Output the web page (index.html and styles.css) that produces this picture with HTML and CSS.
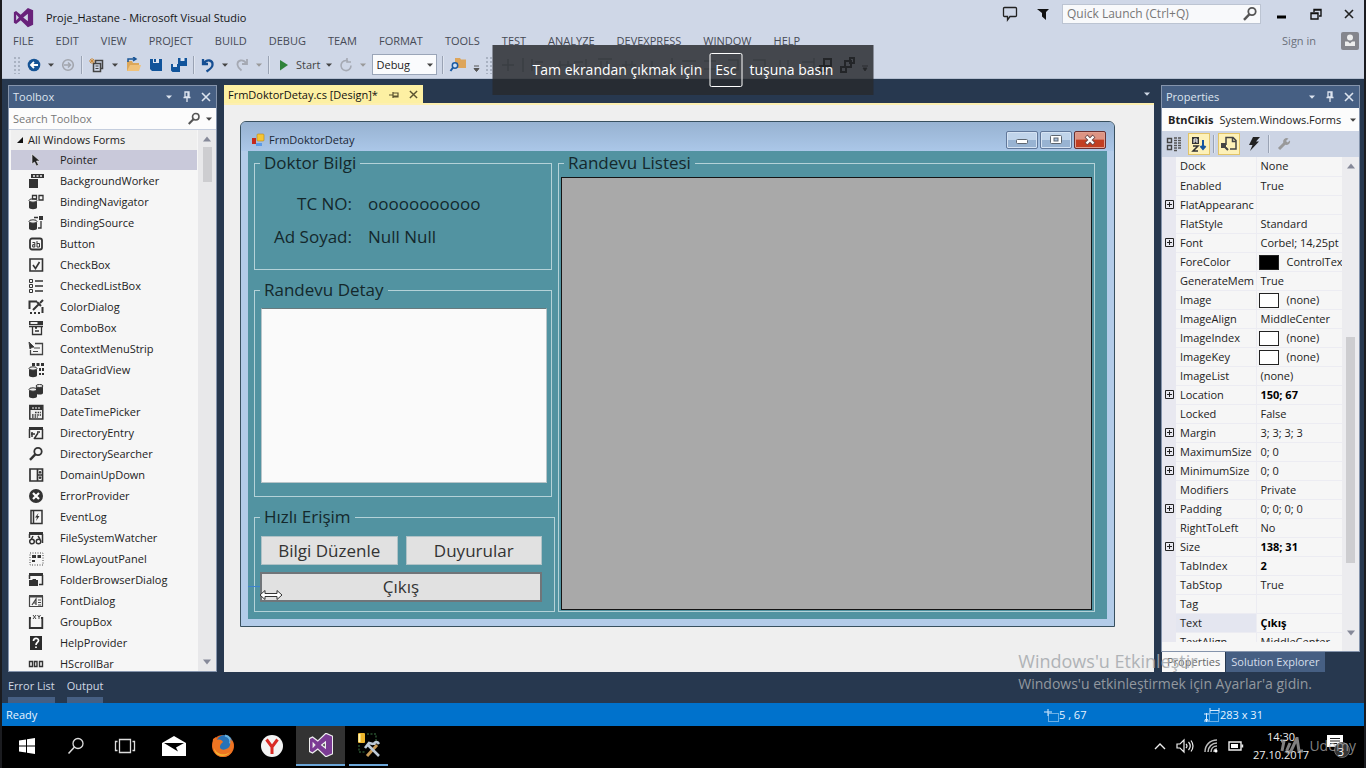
FILE: index.html
```html
<!DOCTYPE html>
<html lang="tr">
<head>
<meta charset="utf-8">
<title>Proje_Hastane - Microsoft Visual Studio</title>
<link rel="stylesheet" href="styles.css">
</head>
<body>
<svg class="defs" aria-hidden="true">
  <symbol id="caret" viewBox="0 0 8 8"><path d="M1 2.5h6L4 5.8z" fill="currentColor"/></symbol>
  <symbol id="pin" viewBox="0 0 10 12"><path d="M3 1h4v5H3zM6 1v5M1.5 6.5h7M5 7v4" fill="none" stroke="currentColor" stroke-width="1.3"/></symbol>
  <symbol id="close" viewBox="0 0 10 10"><path d="M1 1l8 8M9 1L1 9" stroke="currentColor" stroke-width="1.6"/></symbol>
  <symbol id="lens" viewBox="0 0 16 16"><circle cx="10" cy="5.5" r="3.7" fill="none" stroke="currentColor" stroke-width="1.8"/><path d="M7.3 8.4L2 13.8" stroke="currentColor" stroke-width="2.4"/></symbol>
  <symbol id="vs" viewBox="0 0 24 24"><path fill-rule="evenodd" fill="currentColor" d="M17 1l6 2.6v16.8L17 23l-8.2-7.800L3.500 19.300 1 18V6l2.500-1.300L8.800 8.800zM17 7.800L11.700 12 17 16.200zM3.600 8.700v6.600L6.700 12z"/></symbol>
  <symbol id="plus" viewBox="0 0 9 9"><path d="M.5.5h8v8h-8zM2 4.500h5M4.500 2v5" fill="none" stroke="#222"/></symbol>
  <symbol id="up" viewBox="0 0 8 8"><path d="M0 6.500L4 1.500l4 5z" fill="currentColor"/></symbol>
  <symbol id="down" viewBox="0 0 8 8"><path d="M0 1.500L4 6.500l4-5z" fill="currentColor"/></symbol>
  <symbol id="drum" viewBox="0 0 16 16"><path d="M1 6.500v7c0 2.300 8 2.300 8 0v-7z" fill="#333"/><ellipse cx="5" cy="6.500" rx="4" ry="1.700" fill="#eee" stroke="#333"/></symbol>
</svg>

<header class="top">
  <div class="titlebar">
    <svg class="logo" viewBox="0 0 24 24"><use href="#vs"/></svg>
    <h1>Proje_Hastane - Microsoft Visual Studio</h1>
    <button class="plain" aria-label="Feedback"><svg width="16" height="16" viewBox="0 0 16 16"><path d="M2.500 1.500h11a1 1 0 0 1 1 1v7a1 1 0 0 1-1 1H8L5.500 14v-3.500h-3a1 1 0 0 1-1-1v-7a1 1 0 0 1 1-1z" fill="none" stroke="#222" stroke-width="1.300"/></svg></button>
    <button class="plain flag" aria-label="Notifications"><svg width="14" height="14" viewBox="0 0 14 14"><path d="M1 2h12l-3 3v8L6 9.500V6z" fill="#111"/></svg></button>
    <label class="quick"><input type="text" placeholder="Quick Launch (Ctrl+Q)" aria-label="Quick Launch"><svg width="16" height="16"><use href="#lens"/></svg></label>
    <div class="winctl">
      <button class="plain" aria-label="Minimize"><svg width="12" height="12"><path d="M1 9h9" stroke="#000" stroke-width="3"/></svg></button>
      <button class="plain" aria-label="Restore"><svg width="12" height="12"><path d="M1 5h7v6H1zM4 4V1.500h7V8H9M1 5.500h7M4 2h7" fill="none" stroke="#111" stroke-width="1.400"/></svg></button>
      <button class="plain" aria-label="Close"><svg width="10" height="10"><use href="#close"/></svg></button>
    </div>
  </div>
  <div class="menurow">
    <nav class="menu">
      <button>FILE</button><button>EDIT</button><button>VIEW</button><button>PROJECT</button><button>BUILD</button><button>DEBUG</button><button>TEAM</button><button>FORMAT</button><button>TOOLS</button><button>TEST</button><button>ANALYZE</button><button>DEVEXPRESS</button><button>WINDOW</button><button>HELP</button>
    </nav>
    <a class="signin" href="#">Sign in</a>
    <svg width="18" height="18" viewBox="0 0 18 18"><rect width="18" height="18" rx="2" fill="#85868d"/><circle cx="9" cy="5.500" r="3" fill="#eee"/><path d="M4 14V9.500h3l2 2 2-2h3V14z" fill="#eee"/></svg>
  </div>
  <div class="toolbar">
    <span class="grip"></span>
    <button aria-label="Back"><svg width="16" height="16"><circle cx="8" cy="8" r="6.300" fill="#155395"/><path d="M12 8H5M8 5L5 8l3 3" fill="none" stroke="#fff" stroke-width="1.800"/></svg></button>
    <svg class="car"><use href="#caret"/></svg>
    <button aria-label="Forward"><svg width="16" height="16"><circle cx="8" cy="8" r="5.300" fill="none" stroke="#a2a5ad" stroke-width="1.600"/><path d="M4 8h7M8 5.500L10.500 8 8 10.500" fill="none" stroke="#a2a5ad" stroke-width="1.500"/></svg></button>
    <i class="sep"></i>
    <button aria-label="New project"><svg width="18" height="16"><path d="M5.500 6.500h7v8h-7zM7.500 6V3.500h7v8H13" fill="none" stroke="#444" stroke-width="1.500"/><path d="M7.500 9h3M7.500 11.500h3" stroke="#444"/><path d="M4 1v6M1 4h6M2 2l4 4M6 2L2 6" stroke="#cb8b3d"/></svg></button>
    <svg class="car"><use href="#caret"/></svg>
    <button aria-label="Open"><svg width="18" height="16"><path d="M3 14V4h5l1 2h6v8z" fill="#dca75a"/><path d="M3 14l3-6h11l-2 6z" fill="#f0c27b"/><path d="M4 5V2h7M9 0l3 2-3 2" fill="none" stroke="#1a5596" stroke-width="1.500"/></svg></button>
    <button aria-label="Save"><svg width="18" height="16"><path d="M3 2h12v12H5l-2-2z" fill="#11549b"/><path d="M6 2h6v4H6z" fill="#dce4f1"/><path d="M7 2h2v3H7z" fill="#11549b"/></svg></button>
    <button aria-label="Save all"><svg width="18" height="16"><path d="M8 1h9v8H8zM1 7h9v8H2.500L1 13.500z" fill="#11549b"/><path d="M10.500 1h4v3h-4zM3 7h4v3H3z" fill="#dce4f1"/></svg></button>
    <i class="sep"></i>
    <button aria-label="Undo"><svg width="16" height="16"><path d="M3 2v5h5M3.500 6.500C7 1.500 13 3 12.500 8c-.3 3-3 4.500-6 6.500" fill="none" stroke="#164f93" stroke-width="2.300"/></svg></button>
    <svg class="car"><use href="#caret"/></svg>
    <button aria-label="Redo"><svg width="16" height="16"><path d="M13 2v5H8M12.500 6.500C9 1.500 3 3 3.500 8c.3 2.500 2 4 4 5.500" fill="none" stroke="#a5a9b3" stroke-width="1.800"/></svg></button>
    <svg class="car dim"><use href="#caret"/></svg>
    <i class="sep"></i>
    <button class="start"><svg width="16" height="16"><path d="M5 3l8 5-8 5.500z" fill="#30833a"/></svg>Start</button>
    <svg class="car"><use href="#caret"/></svg>
    <button aria-label="Restart"><svg width="16" height="16"><path d="M10 4A5 5 0 1 0 13 8.500M9 1v4h4" fill="none" stroke="#a5a9b3" stroke-width="1.600"/></svg></button>
    <svg class="car dim"><use href="#caret"/></svg>
    <span class="combo"><select aria-label="Configuration"><option>Debug</option></select><svg class="car"><use href="#caret"/></svg></span>
    <i class="sep"></i>
    <button aria-label="Find in files"><svg width="18" height="16"><path d="M6 1h5l1 1.500h5V11H6z" fill="#dda55b"/><circle cx="6" cy="8.500" r="2.700" fill="#cfe0f5" stroke="#1a5ba3" stroke-width="1.500"/><path d="M4 10.500L1.500 14" stroke="#1a5ba3" stroke-width="2"/></svg></button>
    <svg class="over" viewBox="0 0 8 16"><path d="M2 9h5M2 11.500h5l-2.500 3z" fill="#555" stroke="#555"/></svg>
    <span class="grip"></span>
    <svg class="layout-tools" width="380" height="16" viewBox="0 0 380 16"><path d="M10 2v12M4 8h12M25 1v14M34 2v12M37 5h8M37 10h6M60 8h14M62 4v8M70 4v8M88 2v12M76 5h9M79 10h6M100 2h14M103 4v9M109 4v6M124 8h14M128 4v9M134 4v9M150 14h14M154 4v8M174 1v14M184 4h14M184 11h14M206 4h12M206 12h12M230 3h10v10h-10M255 3h12v10h-12M282 3v10M290 3v10M304 5h12M304 11h12M316 1v14" fill="none" stroke="#58606d" stroke-width="1.500" opacity=".5"/><path d="M322 9h5v5h-5zM326 2h7v7h-7zM343 10h5v5h-5zM347 4h6v6h-6zM352 1h4v5h-4z" fill="none" stroke="#111" stroke-width="2"/><path d="M364 9h6M365 11h4l-2 3z" stroke="#333"/></svg>
  </div>
</header>

<main class="workspace">
  <section class="panel toolbox">
    <div class="panelhead"><h2>Toolbox</h2><svg class="car"><use href="#caret"/></svg><svg width="10" height="12"><use href="#pin"/></svg><svg width="10" height="10"><use href="#close"/></svg></div>
    <label class="search"><input type="text" placeholder="Search Toolbox" aria-label="Search Toolbox"><svg width="14" height="14"><use href="#lens"/></svg><svg class="car"><use href="#caret"/></svg></label>
    <div class="scroller">
      <ul class="tools">
        <li class="group"><svg width="8" height="8"><path d="M7 1v6H1z" fill="#111"/></svg>All Windows Forms</li>
        <li class="selected"><svg viewBox="0 0 16 16"><path d="M4 2v10l2.500-2 2 4 2-1-2-4H12z" fill="#222" stroke="#eee" stroke-width=".6"/></svg>Pointer</li>
        <li><svg viewBox="0 0 16 16"><path d="M1 6h9v9H1zM3 1h13v4H3z" fill="#333"/><path d="M5 3h2M8.500 3h2M12 3h2" stroke="#eee" stroke-width="1.500"/></svg>BackgroundWorker</li>
        <li><svg viewBox="0 0 16 16"><use href="#drum"/><path d="M4.500 1.500h4V5h-4zM11 1.500h4V6h-4z" fill="none" stroke="#333" stroke-width="1.300"/></svg>BindingNavigator</li>
        <li><svg viewBox="0 0 16 16"><use href="#drum"/><path d="M11 1h4v4h-4z" fill="#333"/><path d="M6 2.500h4M13 6v7h-3" fill="none" stroke="#333" stroke-width="1.300"/></svg>BindingSource</li>
        <li><svg viewBox="0 0 16 16"><rect x="2" y="2.500" width="12" height="11" rx="2" fill="none" stroke="#333" stroke-width="1.800"/><path d="M4.500 6.500h2.300V11H4.700V8.700h2M9 5v6h2.500V7.500H9" fill="none" stroke="#333"/></svg>Button</li>
        <li><svg viewBox="0 0 16 16"><path d="M2 2h12.500v12H2z" fill="none" stroke="#333" stroke-width="1.600"/><path d="M5 8l2.500 3.500L11.500 5" fill="none" stroke="#333" stroke-width="1.600"/></svg>CheckBox</li>
        <li><svg viewBox="0 0 16 16"><path d="M1.500 1.500h3v3h-3zM1.500 6.500h3v3h-3zM1.500 11.500h3v3h-3z" fill="none" stroke="#333"/><path d="M7 3h8M7 8h8M7 13h8" stroke="#333" stroke-width="1.600"/></svg>CheckedListBox</li>
        <li><svg viewBox="0 0 16 16"><path d="M1.500 10V2.500H9" fill="none" stroke="#333" stroke-width="2"/><path d="M5 11l6-6M9 3l4 4M12 4l3-3" stroke="#333" stroke-width="2"/><path d="M2 14h2M6 14h2M10 14h2M14.500 8v6" stroke="#333" stroke-width="2"/></svg>ColorDialog</li>
        <li><svg viewBox="0 0 16 16"><path d="M1 1h14v4H1z" fill="#333"/><path d="M2.500 2h7v2h-7z" fill="#eee"/><path d="M4.500 6v8.500h9V6M7 8h2M7 11h4M1 6.500h14" fill="none" stroke="#333" stroke-width="1.300"/></svg>ComboBox</li>
        <li><svg viewBox="0 0 16 16"><path d="M7 2.500h7.500v11h-12V9" fill="none" stroke="#444" stroke-width="1.300"/><path d="M1 1l5 5-2 .3L2 8zM6 7h6M5 10.500h5" fill="#333" stroke="#444"/></svg>ContextMenuStrip</li>
        <li><svg viewBox="0 0 16 16"><use href="#drum"/><path d="M4 1h3v3H4zM8.500 1h3v3h-3zM13 1h3v3h-3zM11 6h2v3h-2zM14 6h2v3h-2zM11 11h2v2h-2zM14 11h2v2h-2z" fill="#333"/></svg>DataGridView</li>
        <li><svg viewBox="0 0 16 16"><use href="#drum"/><path d="M8 3v7c0 2 7 2 7 0V3z" fill="#333"/><ellipse cx="11.500" cy="3" rx="3.500" ry="1.500" fill="#eee" stroke="#333"/></svg>DataSet</li>
        <li><svg viewBox="0 0 16 16"><path d="M1.800 1.500h13V15h-13z" fill="#eee" stroke="#333" stroke-width="1.500"/><path d="M2 2h12v4H2z" fill="#333"/><path d="M4 4h2M7 4h2M10 4h2" stroke="#fff"/><path d="M7 8.500h6M4 11h9M4 13h6" stroke="#333" stroke-width="1.500" stroke-dasharray="1.600 1"/></svg>DateTimePicker</li>
        <li><svg viewBox="0 0 16 16"><path d="M1 2h14v3H1z" fill="#333"/><path d="M1.500 4v9M14.500 4v9.500H7M3 9h4M4 7v5M10 8l-4 6M9 7h3" fill="none" stroke="#333" stroke-width="1.500"/></svg>DirectoryEntry</li>
        <li><svg viewBox="0 0 16 16" color="#333"><use href="#lens"/></svg>DirectorySearcher</li>
        <li><svg viewBox="0 0 16 16"><path d="M2 2h12.500v12H2zM9.500 2v12M10 8h4" fill="none" stroke="#333" stroke-width="1.700"/><path d="M11 6l1-2 1 2zM11 10l1 2 1-2z" fill="#333" stroke="#333"/></svg>DomainUpDown</li>
        <li><svg viewBox="0 0 16 16"><circle cx="8" cy="8" r="7" fill="#333"/><path d="M5 5l6 6M11 5l-6 6" stroke="#fff" stroke-width="2.200"/></svg>ErrorProvider</li>
        <li><svg viewBox="0 0 16 16"><path d="M3 1.500h11v13H3zM5.500 2v12" fill="none" stroke="#333" stroke-width="1.500"/><path d="M10.500 4L7 8.500h2L8 12l3.500-5h-2z" fill="#333"/></svg>EventLog</li>
        <li><svg viewBox="0 0 16 16"><path d="M1 2h14v3H1z" fill="#333"/><path d="M1.500 4v4M14.500 4v9M5 6L3.500 9M10 6l2 3" stroke="#333" stroke-width="1.500"/><circle cx="4" cy="11.500" r="2.300" fill="none" stroke="#333" stroke-width="1.500"/><circle cx="10.500" cy="11.500" r="2.300" fill="none" stroke="#333" stroke-width="1.500"/></svg>FileSystemWatcher</li>
        <li><svg viewBox="0 0 16 16"><path d="M2 2h13v12H2z" fill="none" stroke="#444" stroke-dasharray="1 1.500"/><path d="M4 4h4v3H4zM9.500 4H13v3H9.500zM4 9h3v2H4z" fill="#333"/></svg>FlowLayoutPanel</li>
        <li><svg viewBox="0 0 16 16"><path d="M1 1h14v3H1zM1 8h3l1-1h3v1h2v6H1z" fill="#333"/><path d="M1.500 3v4M14.500 3v9.500H11" fill="none" stroke="#333" stroke-width="1.500"/></svg>FolderBrowserDialog</li>
        <li><svg viewBox="0 0 16 16"><path d="M1 2h14v2.500H1z" fill="#444"/><path d="M1.500 3v10.500h13V3M4 12l4-6v6M5.500 10H8M10 7h3M10 9.500h3M10 12h3" fill="none" stroke="#444" stroke-width="1.200"/></svg>FontDialog</li>
        <li><svg viewBox="0 0 16 16"><path d="M3 4H1.800v10h12.500V4H13" fill="none" stroke="#333" stroke-width="1.800"/><path d="M5 1l3 4M8 1L5 5M9.500 1L11 3l1.500-2M11 3v2" fill="none" stroke="#444"/></svg>GroupBox</li>
        <li><svg viewBox="0 0 16 16"><path d="M2 1h12v14H2z" fill="#2b2b2b"/><path d="M5.500 6c0-3.500 5-3.500 5-.5C10.500 7.500 8 7.500 8 10M8 11.500V13" fill="none" stroke="#fff" stroke-width="1.700"/></svg>HelpProvider</li>
        <li><svg viewBox="0 0 16 16"><path d="M1.500 5.500h3v5h-3zM6.500 5.500h2.500v5H6.500zM11.500 5.500h3v5h-3z" fill="none" stroke="#333" stroke-width="1.400"/></svg>HScrollBar</li>
      </ul>
      <div class="bar"><svg width="8" height="8"><use href="#up"/></svg><span class="thumb"></span><svg width="8" height="8"><use href="#down"/></svg></div>
    </div>
  </section>

  <section class="doc">
    <div class="tabs">
      <button class="tab">FrmDoktorDetay.cs [Design]*<svg class="tabpin" width="12" height="10" viewBox="0 0 12 10"><path d="M1 5h4M5 2v6M5 3h5v4H5M5 6h5" fill="none" stroke="#5b5330" stroke-width="1.200"/></svg><svg width="9" height="9" viewBox="0 0 10 10"><use href="#close"/></svg></button>
      <svg class="car"><use href="#caret"/></svg>
    </div>
    <div class="canvas">
      <div class="form">
        <div class="formtitle">
          <svg width="14" height="14" viewBox="0 0 14 14"><rect x="1" y="5" width="4" height="6" fill="#c5291b"/><rect x="6" y="1" width="7" height="7" rx="1" fill="#f5c534" stroke="#b98412" stroke-width=".6"/><rect x="5" y="10" width="6" height="3" fill="#5b9be8"/></svg>
          <h3>FrmDoktorDetay</h3>
          <button class="cap" aria-label="Simge durumuna küçült"><svg width="14" height="12"><rect x="1.500" y="5.500" width="11" height="4" rx="1" fill="#fff" stroke="#5d6670"/></svg></button>
          <button class="cap" aria-label="Ekranı kapla"><svg width="14" height="12"><rect x="1.500" y="1.500" width="11" height="8" rx="1" fill="#fff" stroke="#5d6670"/><rect x="5" y="4" width="4" height="3" fill="#a8c0de" stroke="#5d6670"/></svg></button>
          <button class="cap red" aria-label="Kapat"><svg width="14" height="12"><path d="M3 2l8 8M11 2l-8 8" stroke="#6b4a4a" stroke-width="4"/><path d="M3.500 2.500l7 7M10.500 2.500l-7 7" stroke="#fff" stroke-width="2.400"/></svg></button>
        </div>
        <div class="client">
          <div class="left">
            <fieldset class="info">
              <legend>Doktor Bilgi</legend>
              <dl><dt>TC NO:</dt><dd>ooooooooooo</dd><dt>Ad Soyad:</dt><dd>Null Null</dd></dl>
            </fieldset>
            <fieldset class="detail">
              <legend>Randevu Detay</legend>
              <textarea aria-label="Randevu Detay"></textarea>
            </fieldset>
            <fieldset class="access">
              <legend>Hızlı Erişim</legend>
              <div class="pair"><button>Bilgi Düzenle</button><button>Duyurular</button></div>
              <button class="exit">Çıkış</button>
              <svg class="cursor" width="24" height="12" viewBox="0 0 24 12"><path d="M1 6l5-4.500V4.500h12V1.500L23 6l-5 4.500V7.500H6v3z" fill="#fff" stroke="#333"/></svg>
              <span class="snap"></span>
            </fieldset>
          </div>
          <fieldset class="list">
            <legend>Randevu Listesi</legend>
            <div class="datagrid"></div>
          </fieldset>
        </div>
      </div>
    </div>
  </section>

  <section class="side">
    <div class="panel props">
      <div class="panelhead"><h2>Properties</h2><svg class="car"><use href="#caret"/></svg><svg width="10" height="12"><use href="#pin"/></svg><svg width="10" height="10"><use href="#close"/></svg></div>
      <button class="object"><b>BtnCikis</b><span>System.Windows.Forms</span><svg class="car"><use href="#caret"/></svg></button>
      <div class="proptools">
        <button aria-label="Categorized"><svg width="16" height="16"><path d="M1.500 2.500h4v4h-4zM1.500 9.500h4v4h-4z" fill="none" stroke="#444" stroke-width="1.400"/><path d="M8 2h7M8 4.500h7M8 7h7M8 9.500h7M8 12h7M8 14.500h4" stroke="#555" stroke-width="1.300" stroke-dasharray="3 1"/></svg></button>
        <button class="on" aria-label="Alphabetical"><svg width="16" height="16"><path d="M1 1h7v7H1z" fill="#333"/><path d="M3 7V3h3v4M3 5h3" fill="none" stroke="#fff"/><path d="M2 10h5l-5 5h5" fill="none" stroke="#333" stroke-width="1.500"/><path d="M12 4v9M9.500 10l2.500 3 2.500-3" fill="none" stroke="#1556a0" stroke-width="2"/></svg></button>
        <i class="sep"></i>
        <button class="on" aria-label="Properties"><svg width="16" height="16"><path d="M5 9V1.500h7l3 3V13H9M11.500 2v3.500H15" fill="none" stroke="#444" stroke-width="1.500"/><path d="M1 8h3v3H1zM4 11l3 3" fill="#444" stroke="#444" stroke-width="2"/></svg></button>
        <button aria-label="Events"><svg width="16" height="16"><path d="M7 1h7l-4 4.500h3L4 15l2.500-6H3z" fill="#222"/></svg></button>
        <i class="sep"></i>
        <button aria-label="Property pages"><svg width="16" height="16"><path d="M3 13l6-6" stroke="#999" stroke-width="3"/><path d="M12.500 2.500L10 5l1.500 1.500L14 4.500a3.500 3.500 0 1 1-1.500-2z" fill="#999"/></svg></button>
      </div>
      <div class="scroller">
        <div class="tablewrap">
          <table>
            <tr><td class="x"></td><th>Dock</th><td>None</td></tr>
            <tr><td class="x"></td><th>Enabled</th><td>True</td></tr>
            <tr><td class="x"><svg><use href="#plus"/></svg></td><th>FlatAppearanc</th><td></td></tr>
            <tr><td class="x"></td><th>FlatStyle</th><td>Standard</td></tr>
            <tr><td class="x"><svg><use href="#plus"/></svg></td><th>Font</th><td>Corbel; 14,25pt</td></tr>
            <tr><td class="x"></td><th>ForeColor</th><td><i class="swatch black"></i>ControlTex</td></tr>
            <tr><td class="x"></td><th>GenerateMem</th><td>True</td></tr>
            <tr><td class="x"></td><th>Image</th><td><i class="swatch"></i>(none)</td></tr>
            <tr><td class="x"></td><th>ImageAlign</th><td>MiddleCenter</td></tr>
            <tr><td class="x"></td><th>ImageIndex</th><td><i class="swatch"></i>(none)</td></tr>
            <tr><td class="x"></td><th>ImageKey</th><td><i class="swatch"></i>(none)</td></tr>
            <tr><td class="x"></td><th>ImageList</th><td>(none)</td></tr>
            <tr><td class="x"><svg><use href="#plus"/></svg></td><th>Location</th><td><b>150; 67</b></td></tr>
            <tr><td class="x"></td><th>Locked</th><td>False</td></tr>
            <tr><td class="x"><svg><use href="#plus"/></svg></td><th>Margin</th><td>3; 3; 3; 3</td></tr>
            <tr><td class="x"><svg><use href="#plus"/></svg></td><th>MaximumSize</th><td>0; 0</td></tr>
            <tr><td class="x"><svg><use href="#plus"/></svg></td><th>MinimumSize</th><td>0; 0</td></tr>
            <tr><td class="x"></td><th>Modifiers</th><td>Private</td></tr>
            <tr><td class="x"><svg><use href="#plus"/></svg></td><th>Padding</th><td>0; 0; 0; 0</td></tr>
            <tr><td class="x"></td><th>RightToLeft</th><td>No</td></tr>
            <tr><td class="x"><svg><use href="#plus"/></svg></td><th>Size</th><td><b>138; 31</b></td></tr>
            <tr><td class="x"></td><th>TabIndex</th><td><b>2</b></td></tr>
            <tr><td class="x"></td><th>TabStop</th><td>True</td></tr>
            <tr><td class="x"></td><th>Tag</th><td></td></tr>
            <tr class="current"><td class="x"></td><th>Text</th><td><b>Çıkış</b></td></tr>
            <tr><td class="x"></td><th>TextAlign</th><td>MiddleCenter</td></tr>
          </table>
        </div>
        <div class="bar"><svg width="8" height="8"><use href="#up"/></svg><span class="thumb"></span><svg width="8" height="8"><use href="#down"/></svg></div>
      </div>
    </div>
    <div class="sidetabs"><button class="active">Properties</button><button>Solution Explorer</button></div>
  </section>
</main>
<div class="autohide"><button>Error List</button><button>Output</button></div>
<footer class="status">
  <span class="ready">Ready</span>
  <span class="cell"><svg width="15" height="14"><path d="M4 1v7M0 4h8" stroke="#d9ecff"/><path d="M4.500 5.500h10v8h-10z" fill="none" stroke="#d9ecff" stroke-dasharray="1 1"/></svg>5 , 67</span>
  <span class="cell"><svg width="16" height="14"><path d="M5.500 5.500h9v8h-9z" fill="none" stroke="#d9ecff" stroke-dasharray="1 1"/><path d="M6 2.500h9M6 0v5M15 0v5M2.500 5v9M0 6h5M0 13h5M1 11l1.500 2L4 11" fill="none" stroke="#d9ecff"/></svg>283 x 31</span>
</footer>
<div class="taskbar">
  <button aria-label="Başlat"><svg width="16" height="16"><path d="M0 2.500L7 1.500v6H0zM8 1.300L16 0v7.500H8zM0 8.500h7v6l-7-1zM8 8.500h8V16l-8-1.300z" fill="#fff"/></svg></button>
  <button aria-label="Ara"><svg width="18" height="18"><circle cx="11" cy="6.500" r="5" fill="none" stroke="#ddd" stroke-width="1.300"/><path d="M7.500 10L1.500 16.500" stroke="#ddd" stroke-width="1.500"/></svg></button>
  <button aria-label="Görev görünümü"><svg width="22" height="16"><path d="M5.500 1.500h11v13h-11zM3.500 3.500h-2v9h2M18.500 3.500h2v9h-2" fill="none" stroke="#ddd" stroke-width="1.300"/></svg></button>
  <button aria-label="Posta"><svg width="26" height="22"><path d="M1 8L13 1l12 7v13H1z" fill="#fff"/><path d="M3 8h20l-8 4.500 2 4z" fill="#000"/></svg></button>
  <button aria-label="Firefox"><svg width="24" height="24"><circle cx="12" cy="12" r="11" fill="#e4631b"/><circle cx="13.500" cy="9" r="8" fill="#2773b8"/><path d="M14 1.500c5 1 6 5 5 8" fill="none" stroke="#69b4e0" stroke-width="2"/><path d="M2 5l3-2 1 3c3-1 5 0 6 2l-2 2c-3 4 1 7 5 5 4-1 5-5 4-10l3 3c2 7-2 15-10 15S0 15 2 5z" fill="#ee7422"/><path d="M3 14c3 7 11 8 16 4-3 4-8 5-12 3-2-1-4-4-4-7z" fill="#f5b331"/></svg></button>
  <button aria-label="Yandex"><svg width="24" height="24"><circle cx="12" cy="12" r="11" fill="#f3f3f3"/><path d="M6.500 5.500L12 13l5.500-7.500M12 12v8" fill="none" stroke="#d92a24" stroke-width="3"/></svg></button>
  <button class="running focus" aria-label="Visual Studio"><svg width="26" height="26" viewBox="-1 -1 26 26"><use href="#vs" width="24" height="24" stroke="#eee" stroke-width="2.500"/><use href="#vs" width="24" height="24"/></svg></button>
  <button class="running idle" aria-label="SQL Server Tools"><svg width="26" height="26"><rect x="2" y="1" width="7" height="10" rx="1" fill="#edb52c"/><path d="M3.500 2v8" stroke="#fff3ad" stroke-width="2"/><path d="M11 2h9v9M3 13v7h7" fill="none" stroke="#3d7846" stroke-dasharray="2 1.500"/><path d="M11 24L21 13" stroke="#c89b58" stroke-width="3"/><path d="M11 12l12 12M9 16l4-5 4 1M18 13c0-3 3-4 5-1" fill="none" stroke="#bdcad8" stroke-width="2.600"/></svg></button>
  <span class="spacer"></span>
  <div class="tray">
    <svg width="14" height="12"><path d="M2 9l5-5 5 5" fill="none" stroke="#eee" stroke-width="1.400"/></svg>
    <svg width="18" height="16"><path d="M1 6h3l4-4v12l-4-4H1z" fill="none" stroke="#eee" stroke-width="1.200"/><path d="M10 6q2 2 0 4M12.500 4q3.500 4 0 8M15 2.500q4 5.500 0 11" fill="none" stroke="#eee" stroke-width="1.200"/></svg>
    <svg width="16" height="16"><path d="M2 14C2 7 7 2 14 2M5 14c0-5 4-9 9-9M8 14c0-4 3-6 6-6M11 14c0-2 1-3 3-3" fill="none" stroke="#bbb" stroke-width="1.500"/><circle cx="13" cy="13" r="1.500" fill="#fff"/></svg>
    <svg width="16" height="12"><path d="M1 2h12v8H1zM14.500 4.500v3" fill="none" stroke="#eee" stroke-width="1.400"/><path d="M3 4h7v4H3z" fill="#fff"/></svg>
  </div>
  <time class="clock">14:30<br>27.10.2017</time>
  <button class="notice" aria-label="Bildirimler"><svg width="26" height="26"><path d="M2 2h16v12h-4l-4 4v-4H2z" fill="#fff"/><path d="M5 5.500h10M5 8h10M5 10.500h7" stroke="#222"/><circle cx="17" cy="17" r="7.500" fill="#353535" stroke="#666"/></svg><span class="count">3</span></button>
  <div class="brand"><svg width="27" height="18"><path d="M4 4h3L5 14M13 6L10 13q0 4 4 1l6-13 2 13h4" fill="none" stroke="#b7b7b7" stroke-width="3"/></svg>Udemy</div>
</div>

<aside class="activation"><p>Windows'u Etkinleştir</p><p>Windows'u etkinleştirmek için Ayarlar'a gidin.</p></aside>
<div class="fullscreen" role="status">Tam ekrandan çıkmak için <kbd>Esc</kbd> tuşuna basın</div>
</body>
</html>
```
FILE: styles.css
```css
* { box-sizing: border-box; }
body {
  margin: 0;
  height: 100vh;
  padding: 0 2px;
  display: flex;
  flex-direction: column;
  position: relative;
  overflow: hidden;
  background: #1b1c20;
  color: #222;
  font: 11px/16px "Open Sans", "Noto Sans", sans-serif;
}
button, input, select, textarea { font: inherit; color: inherit; }
button { background: none; border: 0; padding: 0; display: flex; align-items: center; justify-content: center; white-space: nowrap; }
h1, h2, h3, p, ul, dl, dd { margin: 0; padding: 0; font-size: inherit; font-weight: normal; }
svg { flex: none; display: block; }
.defs { position: absolute; width: 0; height: 0; }
.car { width: 8px; height: 8px; color: #444; }
.car.dim { color: #999; }
.sep { width: 2px; height: 18px; border-left: 1px solid #9aa3b4; border-right: 1px solid #dfe5f0; }

.top { background: #cfd7e7; flex: none; border-bottom: 1px solid #b4bfd1; }
.titlebar { height: 31px; display: flex; align-items: center; padding: 4px 10px 0 11px; }
.logo { width: 21px; height: 21px; color: #68217a; }
.titlebar h1 { flex: 1; margin-left: 12px; color: #151515; }
.titlebar > .plain, .winctl, .quick { margin-top: -8px; }
.flag { margin: 0 12px 0 18px; }
.quick { width: 199px; height: 20px; background: #f8f9fb; border: 1px solid #bcc4d2; display: flex; align-items: center; padding: 0 2px 0 4px; color: #555; font-size: 12px; }
.quick input, .search input { flex: 1; min-width: 0; border: 0; background: none; padding: 0; outline: none; }
input::placeholder { color: #777; opacity: 1; }
.winctl { display: flex; gap: 22px; margin-left: 15px; }
.menurow { height: 20px; display: flex; align-items: center; padding: 0 5px 0 11px; }
.menu { flex: 1; display: flex; gap: 22px; color: #464a55; }
.signin { margin-right: 25px; color: #6a6f7a; text-decoration: none; }
.toolbar { height: 27px; display: flex; align-items: center; gap: 5px; padding: 0 0 0 11px; }
.grip { width: 8px; height: 18px; background: radial-gradient(circle, #a9b2c2 1px, transparent 1px) 0 0 / 4px 4px; }
.start { gap: 5px; color: #444; }
.combo { width: 65px; height: 21px; background: #fafbfd; border: 1px solid #9aa5b8; display: grid; align-items: center; }
.combo select { grid-area: 1 / 1; appearance: none; border: 0; background: none; padding: 0 3px; width: 100%; }
.combo .car { grid-area: 1 / 1; justify-self: end; margin-right: 2px; }
.over { width: 8px; height: 16px; }

.workspace { flex: 1; min-height: 0; display: flex; gap: 7px; padding: 6px 4px 0 6px; background: #27384f; }
.panel { display: flex; flex-direction: column; background: #f6f6f6; border: 1px solid #8594ac; min-height: 0; overflow: hidden; }
.panelhead { flex: none; height: 22px; display: flex; align-items: center; gap: 9px; padding: 0 5px 0 4px; background: #465f83; color: #dde4ef; }
.panelhead h2 { flex: 1; }
.panelhead .car { color: #dde4ef; }
.toolbox { width: 209px; flex: none; }
.search { flex: none; height: 22px; display: flex; align-items: center; gap: 4px; background: #fcfcfc; border-bottom: 1px solid #c5cede; padding: 0 3px 0 4px; color: #555; }
.scroller { flex: 1; min-height: 0; display: flex; }
.tools { flex: 1; list-style: none; overflow: hidden; padding-left: 2px; color: #222; }
.tools li { height: 21px; display: flex; align-items: center; gap: 16px; padding-left: 17px; margin-right: 1px; white-space: nowrap; }
.tools li > svg { width: 16px; height: 16px; }
.tools .group { height: 20px; gap: 4px; padding-left: 5px; background: #efefef; }
.tools .group > svg { width: 8px; height: 8px; }
.tools .selected { height: 20px; background: #c9c9da; }
.bar { width: 18px; flex: none; display: flex; flex-direction: column; align-items: center; padding: 5px 0; background: #e8e8ea; color: #868999; }
.thumb { width: 9px; height: 35px; margin: 4px 0 auto; background: #cdcdd0; }

.doc { flex: 1; min-width: 0; display: flex; flex-direction: column; }
.tabs { height: 18px; flex: none; display: flex; align-items: stretch; justify-content: space-between; padding-right: 3px; }
.tab { background: #fdf0a3; padding: 1px 5px 0 4px; color: #111; }
.tab svg { color: #5b5330; }
.tabpin { margin: 0 9px 0 10px; }
.tabs > .car { align-self: center; color: #cfd8e6; }
.canvas { flex: 1; min-height: 0; border-top: 2px solid #fdefb0; background: #efefef; padding: 16px 39px 45px 16px; display: flex; }
.form { flex: 1; display: flex; flex-direction: column; border: 1px solid #38505f; border-radius: 6px 6px 0 0; background: #b3cce9; padding: 0 7px 7px; min-width: 0; }
.formtitle { height: 29px; flex: none; display: flex; align-items: center; gap: 2px; margin: 0 -7px; padding: 7px 8px 0 10px; border-radius: 5px 5px 0 0; background: linear-gradient(#97b2d1, #abc7e8); }
.formtitle h3 { flex: 1; margin-left: 2px; color: #1a2838; }
.cap { width: 32px; height: 18px; border: 1px solid #61789a; border-radius: 2px; background: linear-gradient(#c0d4ea 50%, #98b3d2 50%); box-shadow: inset 0 0 0 1px #d5e3f3; }
.cap.red { background: linear-gradient(#dd9483 45%, #c23f22 50%); border-color: #6a3030; box-shadow: inset 0 0 0 1px #e0a192; }
.client { flex: 1; min-height: 0; display: flex; gap: 3px; padding: 1px 12px 7px 6px; background: #5293a1; color: #14282c; font: 17px/22px "Open Sans", "Noto Sans", sans-serif; }
.left { width: 301px; flex: none; display: flex; flex-direction: column; gap: 9px; }
fieldset { min-width: 0; margin: 0; border: 1px solid #b4d2d8; position: relative; display: flex; flex-direction: column; }
legend { padding: 0 4px; }
.info, .detail { margin-right: 3px; }
.info { height: 118px; padding: 19px 0 0 8px; }
.info dl { display: grid; grid-template-columns: 89px 1fr; gap: 11px 16px; }
.info dt { text-align: right; }
.detail { flex: 1; padding: 7px 4px 13px 6px; }
.detail legend { margin-left: -1px; }
.info legend { margin-left: -3px; }
.detail textarea { flex: 1; resize: none; background: #fafafa; border: 1px solid #b8c5c9; border-top-color: #687a7e; padding: 2px; }
.access { height: 106px; padding: 8px 12px 4px 5px; gap: 7px; }
.pair { display: flex; gap: 8px; height: 29px; margin-left: 1px; }
.pair button { flex: 1; border: 1px solid #b0c2c6; }
.access button { background: #e1e1e1; color: #333; }
.access .exit { flex: none; height: 30px; border: 2px solid #707579; }
.cursor { position: absolute; left: 4px; bottom: 5px; }
.snap { position: absolute; left: -7px; bottom: 19px; width: 12px; border-top: 1px solid #3d83cf; }
.list { flex: 1; padding: 3px 2px 1px; }
.list legend { margin-left: 3px; }
.datagrid { flex: 1; background: #a9a9a9; border: 1px solid #141414; }

.side { width: 199px; flex: none; display: flex; flex-direction: column; }
.props { flex: 1; }
.object { flex: none; height: 23px; justify-content: flex-start; gap: 6px; padding: 0 2px 0 6px; background: #fcfcfc; }
.object span { flex: 1; text-align: left; }
.proptools { flex: none; height: 26px; display: flex; align-items: center; gap: 3px; padding-left: 1px; background: #ccd4e4; }
.proptools button { width: 22px; height: 22px; }
.proptools .on { background: #fdf1b8; border: 1px solid #e2c469; }
.tablewrap { flex: 1; min-width: 0; overflow: hidden; margin-bottom: 9px; }
table { width: 100%; table-layout: fixed; border-collapse: collapse; }
tr { height: 19px; }
th, td { padding: 0 0 0 4px; height: 19px; font-weight: normal; text-align: left; white-space: nowrap; overflow: hidden; border-bottom: 1px solid #ececf2; line-height: 18px; }
th { width: 80px; border-right: 1px solid #ececf2; padding-left: 4px; }
td.x { width: 14px; padding: 0 0 0 3px; background: #e8e8f0; border-bottom: 0; }
.x svg { width: 9px; height: 9px; }
tr.current th { background: #e4e6f0; }
td b { color: #000; }
.swatch { display: inline-block; vertical-align: middle; width: 20px; height: 15px; border: 1px solid #222; margin: 0 8px 0 -2px; background: #fff; }
.swatch.black { background: #000; }
.side .bar { width: 17px; padding: 5px 0 14px; background: #ececef; }
.side .thumb { height: 226px; margin-top: auto; margin-bottom: 66px; }
.sidetabs { flex: none; height: 20px; display: flex; gap: 1px; padding-left: 1px; }
.sidetabs button { padding: 0 5px; background: #465f83; color: #d5deeb; }
.sidetabs .active { background: #f8f8f8; color: #666; }

.autohide { flex: none; display: flex; gap: 12px; height: 31px; padding: 6px 6px 0; background: #27384f; color: #d1d9e5; }
.autohide button { border-bottom: 6px solid #465f83; align-items: flex-start; }
.status { flex: none; height: 23px; display: flex; align-items: center; background: #0072cc; color: #e7f3ff; padding-left: 4px; }
.ready { flex: 1; }
.cell { width: 160px; display: flex; align-items: center; }
.taskbar { flex: none; height: 42px; display: flex; position: relative; background: #000; padding-bottom: 2px; }
.taskbar > button { width: 49px; }
.running { border-bottom: 2px solid #6ba6d8; color: #7b3b94; }
.taskbar > .focus { background: #333; }
.taskbar > .idle { width: 39px; margin-left: 4px; }
.spacer { flex: 1; }
.tray { display: flex; align-items: center; gap: 9px; }
.clock { width: 74px; text-align: center; color: #eee; line-height: 18px; padding-top: 2px; }
.taskbar > .notice { width: 46px; padding-right: 6px; position: relative; }
.count { position: absolute; right: 20px; top: 18px; color: #fff; }
.brand { position: absolute; right: 8px; bottom: 13px; display: flex; align-items: center; gap: 5px; color: #b7b7b7; font-size: 14px; line-height: 18px; opacity: .7; }

.activation { position: absolute; right: 54px; bottom: 74px; color: #a5a9ad; font-size: 14px; line-height: 20px; opacity: .85; }
.activation p:first-child { font-size: 18px; line-height: 26px; }
.fullscreen { position: absolute; left: 50%; top: 45px; transform: translateX(-50%); width: 381px; height: 50px; display: flex; align-items: center; justify-content: center; gap: 7px; background: rgba(40, 42, 46, .83); color: #fff; font-size: 14px; white-space: nowrap; }
kbd { border: 1px solid #fff; border-radius: 2px; font: inherit; line-height: 32px; padding: 0 5px; }
```
